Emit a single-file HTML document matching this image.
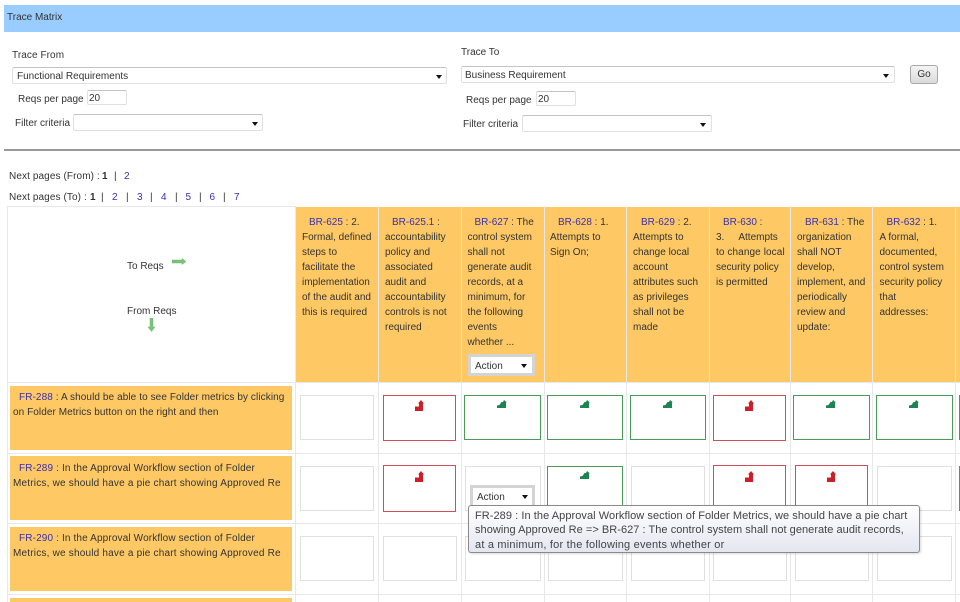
<!DOCTYPE html>
<html><head><meta charset="utf-8"><title>Trace Matrix</title>
<style>
html,body{margin:0;padding:0;background:#fff}
#p{position:relative;width:960px;height:602px;overflow:hidden;background:#fff;font-family:"Liberation Sans",sans-serif;font-size:10px;color:#333;filter:blur(.3px)}
#p div,#p svg{position:absolute}
.t{line-height:15px;white-space:nowrap;color:#333}
a{color:#3a2fb0;text-decoration:none}
.s{background:#fff;border:1px solid #e0e0e0;border-top-color:#c4c4c4;border-radius:2px;box-sizing:border-box}
.a{width:0;height:0;border-left:3.5px solid transparent;border-right:3.5px solid transparent;border-top:4px solid #111}
.o{background:#fec964}
.l{background:#e8e8e8}
.b{box-sizing:border-box;border:1px solid #e0e0e0;background:#fff}
.r{border-color:#cf4f57}
.g{border-color:#4a9a58}
.ab{box-sizing:border-box;background:#fff;border:3px solid #d4d4d4}
</style></head><body>
<svg width="0" height="0" style="position:absolute"><defs>
<symbol id="ir" viewBox="0 0 9 11"><path d="M6 0L9 3.500H8V11H0V6.500H4V3.500H3Z" fill="#cc1f2a"/></symbol>
<symbol id="ig" viewBox="0 0 10 8"><path d="M7 0L10 2.500H9V8H0V5.500L2.500 5L4.500 2H6Z" fill="#1d8350"/></symbol>
</defs></svg>
<div id="p">
<div style="left:4px;top:5px;width:956px;height:27px;background:#99ccff"></div>
<div class="t" style="left:7px;top:10px">Trace Matrix</div>

<div class="t" style="left:12px;top:48px;letter-spacing:.08px">Trace From</div>
<div class="s" style="left:12px;top:67px;width:435px;height:17px"></div>
<div class="t" style="left:17px;top:69px">Functional Requirements</div>
<div class="a" style="left:436px;top:75px"></div>
<div class="t" style="left:18px;top:92px">Reqs per page</div>
<div class="s" style="left:87px;top:90px;width:40px;height:15px"></div>
<div class="t" style="left:89px;top:91px">20</div>
<div class="t" style="left:15px;top:116px">Filter criteria</div>
<div class="s" style="left:73px;top:114px;width:190px;height:17px"></div>
<div class="a" style="left:252px;top:122px"></div>

<div class="t" style="left:461px;top:45px">Trace To</div>
<div class="s" style="left:461px;top:66px;width:434px;height:17px"></div>
<div class="t" style="left:465px;top:68px">Business Requirement</div>
<div class="a" style="left:883px;top:74px"></div>
<div class="t" style="left:466px;top:93px">Reqs per page</div>
<div class="s" style="left:536px;top:91px;width:40px;height:15px"></div>
<div class="t" style="left:538px;top:92px">20</div>
<div class="t" style="left:463px;top:117px">Filter criteria</div>
<div class="s" style="left:522px;top:115px;width:190px;height:17px"></div>
<div class="a" style="left:700px;top:123px"></div>
<div style="left:910px;top:65px;width:28px;height:19px;box-sizing:border-box;border:1px solid #a8a8a8;border-radius:3px;background:linear-gradient(#f4f4f4,#dadada);text-align:center;line-height:17px;color:#333">Go</div>

<div style="left:4px;top:149px;width:956px;height:1.500px;background:#999"></div>

<div class="t" style="left:9px;top:169px;letter-spacing:.1px">Next pages (From) :</div>
<div class="t" style="left:102px;top:169px"><b>1</b></div>
<div class="t" style="left:114px;top:169px">|</div>
<div class="t" style="left:124px;top:169px"><a>2</a></div>

<div class="t" style="left:9px;top:190px;letter-spacing:.1px">Next pages (To) :</div>
<div class="t" style="left:90px;top:190px"><b>1</b></div>
<div class="t" style="left:101px;top:190px">|</div>
<div class="t" style="left:112px;top:190px"><a>2</a></div>
<div class="t" style="left:126px;top:190px">|</div>
<div class="t" style="left:137px;top:190px"><a>3</a></div>
<div class="t" style="left:150px;top:190px">|</div>
<div class="t" style="left:161px;top:190px"><a>4</a></div>
<div class="t" style="left:175px;top:190px">|</div>
<div class="t" style="left:185.500px;top:190px"><a>5</a></div>
<div class="t" style="left:199px;top:190px">|</div>
<div class="t" style="left:209.500px;top:190px"><a>6</a></div>
<div class="t" style="left:223px;top:190px">|</div>
<div class="t" style="left:234px;top:190px"><a>7</a></div>

<!-- grid -->
<div class="l" style="left:7px;top:206px;width:289px;height:1px"></div>
<div class="l" style="left:7px;top:206px;width:1px;height:396px"></div>
<div class="l" style="left:295px;top:206px;width:1px;height:396px"></div>
<div class="o" style="left:296px;top:206.500px;width:664px;height:176px"></div>
<div class="l" style="left:378px;top:206px;width:1px;height:396px"></div>
<div class="l" style="left:461px;top:206px;width:1px;height:396px"></div>
<div class="l" style="left:544px;top:206px;width:1px;height:396px"></div>
<div class="l" style="left:626px;top:206px;width:1px;height:396px"></div>
<div class="l" style="left:709px;top:206px;width:1px;height:396px"></div>
<div class="l" style="left:790px;top:206px;width:1px;height:396px"></div>
<div class="l" style="left:872px;top:206px;width:1px;height:396px"></div>
<div class="l" style="left:955px;top:206px;width:1px;height:396px"></div>
<div class="l" style="left:7px;top:382px;width:953px;height:1px"></div>
<div class="l" style="left:7px;top:452.500px;width:953px;height:1.500px"></div>
<div class="l" style="left:7px;top:523px;width:953px;height:1px"></div>
<div class="l" style="left:7px;top:593.500px;width:953px;height:1.500px"></div>

<!-- corner -->
<div class="t" style="left:127px;top:259px">To Reqs</div>
<svg style="left:172px;top:258px" width="15" height="7" viewBox="0 0 15 7"><path d="M0 2H10V.5L14 3.500L10 6.500V5H0Z" fill="#7cc47c" stroke="#5aa85a" stroke-width=".4"/></svg>
<div class="t" style="left:127px;top:304px">From Reqs</div>
<svg style="left:147px;top:318px" width="9" height="14" viewBox="0 0 9 14"><path d="M3 0H6V9H8L4.500 13.500L1 9H3Z" fill="#7cc47c" stroke="#5aa85a" stroke-width=".4"/></svg>

<!-- header texts -->
<div class="t" style="left:302px;top:215px"><a style="margin-left:7px">BR-625</a> : 2.<br>Formal, defined<br>steps to<br>facilitate the<br>implementation<br>of the audit and<br>this is required</div>
<div class="t" style="left:385px;top:215px"><a style="margin-left:7px">BR-625.1</a> :<br>accountability<br>policy and<br>associated<br>audit and<br>accountability<br>controls is not<br>required</div>
<div class="t" style="left:467.500px;top:215px"><a style="margin-left:7px">BR-627</a> : The<br>control system<br>shall not<br>generate audit<br>records, at a<br>minimum, for<br>the following<br>events<br>whether ...</div>
<div class="t" style="left:550px;top:215px"><a style="margin-left:8px">BR-628</a> : 1.<br>Attempts to<br>Sign On;</div>
<div class="t" style="left:633px;top:215px"><a style="margin-left:8px">BR-629</a> : 2.<br>Attempts to<br>change local<br>account<br>attributes such<br>as privileges<br>shall not be<br>made</div>
<div class="t" style="left:716px;top:215px"><a style="margin-left:7px">BR-630</a> :<br>3.<span style="margin-left:14px">Attempts</span><br><span style="letter-spacing:.1px">to change local</span><br>security policy<br>is permitted</div>
<div class="t" style="left:797px;top:215px"><a style="margin-left:8px">BR-631</a> : The<br>organization<br>shall NOT<br>develop,<br>implement, and<br>periodically<br>review and<br>update:</div>
<div class="t" style="left:879.500px;top:215px"><a style="margin-left:7px">BR-632</a> : 1.<br>A formal,<br>documented,<br>control system<br>security policy<br>that<br>addresses:</div>

<div class="ab" style="left:468px;top:354px;width:67px;height:22px"></div>
<div class="t" style="left:475px;top:359px">Action</div>
<div class="a" style="left:521px;top:364px"></div>

<!-- row heads -->
<div class="o" style="left:10px;top:386px;width:282px;height:64px"></div>
<div class="o" style="left:10px;top:456px;width:282px;height:64px"></div>
<div class="o" style="left:10px;top:527px;width:282px;height:64px"></div>
<div class="o" style="left:10px;top:597.500px;width:282px;height:10px"></div>
<div class="t" style="left:13px;top:390px"><span style="letter-spacing:.09px"><a style="margin-left:6px">FR-288</a> : A should be able to see Folder metrics by clicking</span><br><span style="letter-spacing:.07px">on Folder Metrics button on the right and then</span></div>
<div class="t" style="left:13px;top:460.500px"><span style="letter-spacing:.14px"><a style="margin-left:6px">FR-289</a> : In the Approval Workflow section of Folder</span><br><span style="letter-spacing:.2px">Metrics, we should have a pie chart showing Approved Re</span></div>
<div class="t" style="left:13px;top:531px"><span style="letter-spacing:.14px"><a style="margin-left:6px">FR-290</a> : In the Approval Workflow section of Folder</span><br><span style="letter-spacing:.2px">Metrics, we should have a pie chart showing Approved Re</span></div>

<!-- row 1 -->
<div class="b" style="left:300px;top:395px;width:74px;height:45px"></div>
<div class="b r" style="left:383px;top:395px;width:73px;height:46px"></div>
<div class="b g" style="left:464px;top:395px;width:77px;height:45px"></div>
<div class="b g" style="left:547px;top:395px;width:76px;height:45px"></div>
<div class="b g" style="left:630px;top:395px;width:76px;height:45px"></div>
<div class="b r" style="left:713px;top:395px;width:73px;height:46px"></div>
<div class="b g" style="left:793px;top:395px;width:77px;height:45px"></div>
<div class="b g" style="left:876px;top:395px;width:77px;height:45px"></div>
<div class="b g" style="left:959px;top:395px;width:20px;height:45px"></div>
<svg style="left:415px;top:400px" width="9" height="11"><use href="#ir"/></svg>
<svg style="left:497px;top:400px" width="10" height="8"><use href="#ig"/></svg>
<svg style="left:580px;top:400px" width="10" height="8"><use href="#ig"/></svg>
<svg style="left:663px;top:400px" width="10" height="8"><use href="#ig"/></svg>
<svg style="left:745px;top:400px" width="9" height="11"><use href="#ir"/></svg>
<svg style="left:826px;top:400px" width="10" height="8"><use href="#ig"/></svg>
<svg style="left:909px;top:400px" width="10" height="8"><use href="#ig"/></svg>

<!-- row 2 -->
<div class="b" style="left:300px;top:466px;width:74px;height:45px"></div>
<div class="b r" style="left:383px;top:465px;width:73px;height:47px"></div>
<div class="b" style="left:465px;top:466px;width:76px;height:45px"></div>
<div class="b g" style="left:547px;top:465.500px;width:76px;height:46px"></div>
<div class="b" style="left:631px;top:466px;width:74px;height:45px"></div>
<div class="b r" style="left:713px;top:465px;width:73px;height:47px"></div>
<div class="b r" style="left:795px;top:465px;width:73px;height:47px"></div>
<div class="b" style="left:877px;top:466px;width:75px;height:45px"></div>
<div class="b g" style="left:959px;top:466px;width:20px;height:45px"></div>
<svg style="left:415px;top:470.500px" width="9" height="11"><use href="#ir"/></svg>
<svg style="left:580px;top:471px" width="10" height="8"><use href="#ig"/></svg>
<svg style="left:745px;top:470.500px" width="9" height="11"><use href="#ir"/></svg>
<svg style="left:827px;top:470.500px" width="9" height="11"><use href="#ir"/></svg>

<div class="ab" style="left:470px;top:485px;width:65px;height:23px"></div>
<div class="t" style="left:477px;top:489.500px">Action</div>
<div class="a" style="left:522px;top:495px"></div>

<!-- row 3 -->
<div class="b" style="left:300px;top:536px;width:74px;height:45px"></div>
<div class="b" style="left:383px;top:536px;width:74px;height:45px"></div>
<div class="b" style="left:465px;top:536px;width:76px;height:45px"></div>
<div class="b" style="left:548px;top:536px;width:75px;height:45px"></div>
<div class="b" style="left:631px;top:536px;width:74px;height:45px"></div>
<div class="b" style="left:713px;top:536px;width:74px;height:45px"></div>
<div class="b" style="left:795px;top:536px;width:74px;height:45px"></div>
<div class="b" style="left:877px;top:536px;width:75px;height:45px"></div>

<!-- tooltip -->
<div style="left:468px;top:505px;width:452px;height:48px;box-sizing:border-box;border:1px solid #8a8a8a;border-radius:3px;background:linear-gradient(#fff,#e4e5f0);box-shadow:1px 1px 2px rgba(0,0,0,.15)"></div>
<div class="t" style="left:475px;top:508.500px;font-size:11px;line-height:14.500px;color:#444"><span style="letter-spacing:.06px">FR-289 : In the Approval Workflow section of Folder Metrics, we should have a pie chart</span><br><span style="letter-spacing:.04px">showing Approved Re =&gt; BR-627 : The control system shall not generate audit records,</span><br><span style="letter-spacing:.2px">at a minimum, for the following events whether or</span></div>
</div>
</body></html>
